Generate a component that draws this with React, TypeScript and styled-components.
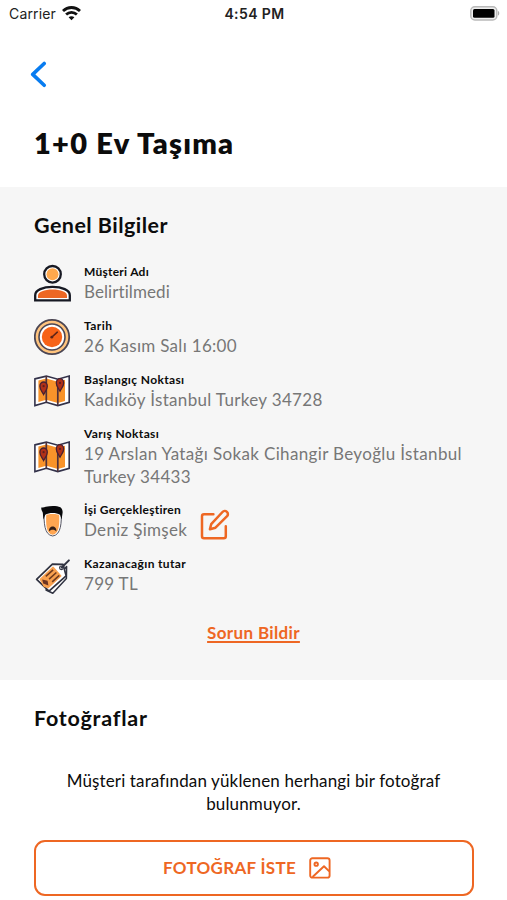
import React from "react";
import styled, { createGlobalStyle } from "styled-components";

const ORANGE = "#ee6723";

const GlobalStyle = createGlobalStyle`
  * { box-sizing: border-box; }
  html, body, #root { margin: 0; height: 900px; overflow: hidden; background: #fff; }
  body { font-family: Lato, "Open Sans", sans-serif; color: #0c0c0c; }
  h1, h2, p { margin: 0; }
  svg { display: block; flex: none; }
`;

const Screen = styled.main`
  width: 507px;
  height: 900px;
  overflow: hidden;
  display: flex;
  flex-direction: column;
`;

const StatusBar = styled.div`
  height: 28px;
  display: grid;
  grid-template-columns: 1fr auto 1fr;
  align-items: center;
  padding: 0 7px 0 9px;
  font: 400 14px/28px Inter, sans-serif;
  color: #222;
`;

const Carrier = styled.div`
  display: flex;
  align-items: center;
  gap: 6px;
  letter-spacing: 0.15px;
`;

const Clock = styled.div`
  font-weight: 600;
  letter-spacing: 0.4px;
`;

const BatterySlot = styled.div`
  display: flex;
  justify-content: flex-end;
  margin-top: -2px;
`;

const Header = styled.header`
  height: 159px;
  padding: 33px 30px 0;
  display: flex;
  flex-direction: column;
`;

const BackButton = styled.button`
  width: 18px;
  height: 28px;
  padding: 0;
  border: 0;
  background: none;
`;

const Title = styled.h1`
  margin: 34px 0 0 4px;
  font-size: 29px;
  line-height: 40px;
  font-weight: 800;
  white-space: nowrap;
  letter-spacing: 1.25px;
`;

const Info = styled.section`
  height: 493px;
  padding: 24px 34px 0;
  background: #f6f6f6;
`;

const SectionTitle = styled.h2<{ $track: number }>`
  font-size: 21.5px;
  line-height: 28px;
  font-weight: 700;
  white-space: nowrap;
  letter-spacing: ${(p) => p.$track}px;
`;

const Rows = styled.div`
  margin-top: 24.9px;
  display: flex;
  flex-direction: column;
  gap: 14.9px;
`;

const Row = styled.div`
  display: flex;
  align-items: center;
`;

const IconSlot = styled.div`
  width: 36px;
  margin-right: 14px;
`;

const Label = styled.div<{ $track?: number }>`
  font-size: 12px;
  line-height: 16px;
  font-weight: 700;
  white-space: nowrap;
  letter-spacing: ${(p) => p.$track ?? 0.36}px;
`;

const Value = styled.div<{ $track?: number }>`
  font-size: 17px;
  line-height: 23px;
  color: #777;
  white-space: nowrap;
  letter-spacing: ${(p) => p.$track ?? 0.3}px;
`;

const EditButton = styled.button`
  margin: 7px 0 0 12px;
  padding: 0;
  border: 0;
  background: none;
  height: 32px;
`;

const ReportLink = styled.a`
  display: block;
  width: max-content;
  margin: 25.3px auto 0;
  font-size: 17px;
  line-height: 24px;
  font-weight: 700;
  letter-spacing: 0.35px;
  color: ${ORANGE};
  text-decoration: underline;
  text-decoration-thickness: 1.5px;
  text-underline-offset: 2px;
`;

const Photos = styled.section`
  flex: 1;
  padding: 24px 34px 0;
`;

const Message = styled.p`
  margin-top: 37px;
  font-size: 17px;
  line-height: 23px;
  text-align: center;
  white-space: pre-line;
  letter-spacing: 0.13px;
`;

const PhotoButton = styled.button`
  margin-top: 25px;
  width: 440px;
  height: 56px;
  border: 2px solid ${ORANGE};
  border-radius: 11px;
  background: #fff;
  color: ${ORANGE};
  display: flex;
  align-items: center;
  justify-content: center;
  gap: 13px;
  padding: 0 14px 0 0;
  font: 700 17px/24px Lato, sans-serif;
  letter-spacing: 0.3px;
`;

const Wifi = () => (
  <svg width="19" height="16" viewBox="0 0 19 16" fill="none" stroke="#111" strokeWidth="2.8">
    <path d="M1 5C5.8.3 13.2.3 18 5" />
    <path d="M4.1 8.6c3.1-2.9 7.7-2.9 10.8 0" />
    <path d="M6.6 11.3c1.6-1.5 4.2-1.5 5.8 0L9.5 14.2z" fill="#111" stroke="none" />
  </svg>
);

const Battery = () => (
  <svg width="31" height="15" viewBox="0 0 31 15">
    <rect x="1.8" y=".8" width="26" height="13.2" rx="4" fill="#eee" stroke="#b9b9b9" strokeWidth="1.5" />
    <rect x="4" y="3" width="21.5" height="8.8" rx="1.5" />
    <path d="M29 5c1.7.6 1.7 4 0 4.6z" fill="#aaa" />
  </svg>
);

const PersonIcon = () => (
  <svg width="38" height="38" viewBox="0 0 38 38">
    <circle cx="18.5" cy="10.3" r="8.3" fill="#fff" stroke="#171923" strokeWidth="2.3" />
    <circle cx="18.5" cy="10.3" r="6" fill="#ffa84d" />
    <path d="M1.2 36.3v-5.1c0-5.2 7.8-8.3 17.3-8.3s17.3 3.1 17.3 8.3v5.1z" fill="#fff" stroke="#171923" strokeWidth="2.3" />
    <path d="M4 33.9v-2.5c0-3.6 6.4-6 14.5-6s14.5 2.4 14.5 6v2.5z" fill="#ed6724" />
  </svg>
);

const ClockIcon = () => (
  <svg width="38" height="38" viewBox="0 0 38 38">
    <circle cx="18" cy="19" r="17.2" fill="#ffc47e" stroke="#4b4654" strokeWidth="1.8" />
    <circle cx="18" cy="19" r="13" fill="#fff" stroke="#4b4654" strokeWidth="1.6" />
    <circle cx="18" cy="19" r="10.2" fill="#f76318" />
    <path d="m18 19 5.3-4.8" stroke="#5c2418" strokeWidth="1.6" strokeLinecap="round" />
    <circle cx="17.8" cy="19.2" r="1.4" fill="#5c2418" />
  </svg>
);

const Pin = ({ x, y }: { x: number; y: number }) => (
  <g transform={`translate(${x} ${y})`}>
    <path d="M0 10C-1.7 6.7-3.7 5-3.7 1.8a3.7 4.3 0 0 1 7.4 0C3.7 5 1.7 6.7 0 10z" fill="#b03018" stroke="#482033" strokeWidth="1.3" />
    <circle cy="1.7" r="1.1" fill="#5c2020" />
  </g>
);

const MapIcon = () => (
  <svg width="38" height="38" viewBox="0 0 38 38">
    <path d="m.9 6.9 11.4-2.8L23.8 7.2l11.4-3.1v26.2l-11.4 3.3-11.5-3.3L.9 33.6z" fill="#fff" stroke="#33324a" strokeWidth="1.6" />
    <path d="m4.4 8.6 7.9-2 11.5 3.1 7.2-2v21.2L23.8 31l-11.5-3.2-7.9 2.1z" fill="#f9932a" />
    <path d="M12.3 4.1v26.2M23.8 7.2v26.4" stroke="#50313b" strokeWidth="1.7" />
    <Pin x={9.6} y={12.5} />
    <Pin x={26} y={9.2} />
  </svg>
);

const FaceIcon = () => (
  <svg width="38" height="38" viewBox="0 0 38 38">
    <path d="M10 9c0 10 0 23 8.7 24 8.7-1 8.7-14 8.7-24z" fill="#fff" stroke="#555562" strokeWidth="1" />
    <path d="M12.2 12.5c0-2 13-2 13 0 .2 7.5.5 18.2-6.5 19.2-7.1-1-6.7-11.7-6.5-19.2z" fill="#ffa651" />
    <path d="M9.4 16.5 8.8 9.8C8.4 7.9 7 7.2 7.3 4.4c1.8.4 2.7.1 4.5-.6C17 2.5 23 2.7 26.4 4.2c1.7 1.1 2.4 3.6 2.2 5.6l-1 6.7-1.6-4.7c-3.7-2.5-11-2.5-14.7 0z" fill="#08090b" />
    <path d="M15 28.4c-.6-6.4 8-6.4 7.4 0-1.6-2.3-5.8-2.3-7.4 0z" fill="#341f17" />
  </svg>
);

const TagIcon = () => (
  <svg width="38" height="38" viewBox="0 0 38 38" strokeLinejoin="round">
    <path d="m12 33 6.8 3.2L32.4 21.5l.2-12z" fill="#fff" stroke="#303341" strokeWidth="1.5" />
    <path d="M2.6 22.4 18.4 7.2l10.7.2 3 11.4L15 34.2z" fill="#fff" stroke="#303341" strokeWidth="1.7" />
    <path d="M6.4 22.3 19 10.2l7.8 8.7-12.5 11.7-4-1.3z" fill="#f9a14f" stroke="#f9a14f" strokeWidth="1.4" />
    <path d="m11.8 19.4 7.3-6.5m-4 9.2 7.3-6.6m-4.2 9.3 7.1-6.5" stroke="#713b1e" strokeWidth="1.6" />
    <path d="m8.2 22.6 5.4 1.2.8 4.8-5.2-2z" fill="#6c3523" />
    <circle cx="27.4" cy="10.8" r="1.8" fill="#fff" stroke="#303341" strokeWidth="1.2" />
    <path d="m27.7 10.5 7.2-7.1" stroke="#303341" strokeWidth="2" strokeLinecap="round" />
  </svg>
);

const EditIcon = () => (
  <svg width="32" height="32" viewBox="0 0 32 32" fill="none" stroke={ORANGE} strokeWidth="2.5" strokeLinecap="round" strokeLinejoin="round">
    <path d="M14.4 5.3H5a2 2 0 0 0-2 2v19.9a2 2 0 0 0 2 2h19.8a2 2 0 0 0 2-2v-9.9" />
    <path d="m10.9 20.2 1.3-5L23.5 3a2.9 2.9 0 0 1 4.6 4.2L16.5 18.7z" />
  </svg>
);

const ImageIcon = () => (
  <svg width="22" height="22" viewBox="0 0 22 22" fill="none" stroke={ORANGE} strokeWidth="1.9" strokeLinejoin="round">
    <rect x="1.2" y="1.2" width="19.4" height="19.4" rx="2.2" />
    <circle cx="7.2" cy="7.2" r="1.7" />
    <path d="M3.5 20 15 9.2l5.3 5.2" />
  </svg>
);

type RowData = {
  icon: React.ReactNode;
  label: string;
  lines: string[];
  labelTrack?: number;
  track?: number;
  editable?: boolean;
};

const rows: RowData[] = [
  { icon: <PersonIcon />, label: "Müşteri Adı", lines: ["Belirtilmedi"], labelTrack: 0.25, track: 0.08 },
  { icon: <ClockIcon />, label: "Tarih", lines: ["26 Kasım Salı 16:00"], labelTrack: 0.45 },
  { icon: <MapIcon />, label: "Başlangıç Noktası", lines: ["Kadıköy İstanbul Turkey 34728"], track: 0.33 },
  { icon: <MapIcon />, label: "Varış Noktası", lines: ["19 Arslan Yatağı Sokak Cihangir Beyoğlu İstanbul", "Turkey 34433"], track: 0.35 },
  { icon: <FaceIcon />, label: "İşi Gerçekleştiren", lines: ["Deniz Şimşek"], labelTrack: 0.27, editable: true },
  { icon: <TagIcon />, label: "Kazanacağın tutar", lines: ["799 TL"] },
];

export default function App() {
  return (
    <>
      <GlobalStyle />
      <Screen>
        <StatusBar>
          <Carrier>Carrier <Wifi /></Carrier>
          <Clock>4:54 PM</Clock>
          <BatterySlot><Battery /></BatterySlot>
        </StatusBar>
        <Header>
          <BackButton aria-label="Geri">
            <svg width="18" height="28" viewBox="0 0 18 28" fill="none" stroke="#087cf0" strokeWidth="3.6" strokeLinecap="round" strokeLinejoin="round">
              <path d="M14.2 2.5 2.7 13.4l11.5 10.9" />
            </svg>
          </BackButton>
          <Title>1+0 Ev Taşıma</Title>
        </Header>
        <Info>
          <SectionTitle $track={0.45}>Genel Bilgiler</SectionTitle>
          <Rows>
            {rows.map((r) => (
              <Row key={r.label}>
                <IconSlot>{r.icon}</IconSlot>
                <div>
                  <Label $track={r.labelTrack}>{r.label}</Label>
                  {r.lines.map((line) => (
                    <Value key={line} $track={r.track}>{line}</Value>
                  ))}
                </div>
                {r.editable && <EditButton aria-label="Düzenle"><EditIcon /></EditButton>}
              </Row>
            ))}
          </Rows>
          <ReportLink>Sorun Bildir</ReportLink>
        </Info>
        <Photos>
          <SectionTitle $track={0.75}>Fotoğraflar</SectionTitle>
          <Message>{"Müşteri tarafından yüklenen herhangi bir fotoğraf\nbulunmuyor."}</Message>
          <PhotoButton>FOTOĞRAF İSTE <ImageIcon /></PhotoButton>
        </Photos>
      </Screen>
    </>
  );
}
